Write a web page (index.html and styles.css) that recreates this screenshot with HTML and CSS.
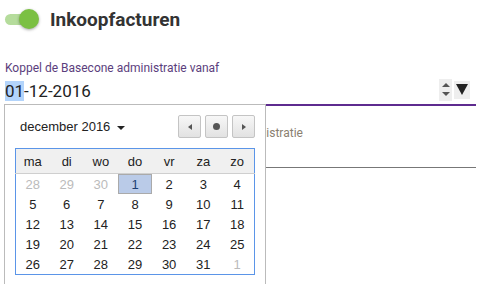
FILE: index.html
```html
<!DOCTYPE html>
<html lang="nl">
<head>
    <meta charset="UTF-8">
    <title>Inkoopfacturen</title>
    <link rel="stylesheet" href="styles.css">
</head>
<body>
    <div class="page">
        <div class="header">
            <span class="toggle"><span class="knob"></span></span>
            <h1>Inkoopfacturen</h1>
        </div>

        <div class="field focused">
            <label>Koppel de Basecone administratie vanaf</label>
            <div class="input-row">
                <span class="value"><span class="sel">01</span>-12-2016</span>
                <span class="spin"><span class="up"></span><span class="down"></span></span>
                <span class="drop"></span>
            </div>
        </div>

        <div class="field second">
            <span class="placeholder">Kies een Basecone administratie</span>
        </div>

        <!-- datumkiezer ligt over de velden heen -->
        <div class="datepicker">
            <div class="dp-head">
                <span class="month">december 2016 <span class="caret"></span></span>
                <div class="nav">
                    <button class="btn"><span class="tri-left"></span></button>
                    <button class="btn"><span class="dot"></span></button>
                    <button class="btn"><span class="tri-right"></span></button>
                </div>
            </div>
            <table class="cal">
                <thead>
                    <tr><th>ma</th><th>di</th><th>wo</th><th>do</th><th>vr</th><th>za</th><th>zo</th></tr>
                </thead>
                <tbody>
                    <tr><td class="other">28</td><td class="other">29</td><td class="other">30</td><td class="selected">1</td><td>2</td><td>3</td><td>4</td></tr>
                    <tr><td>5</td><td>6</td><td>7</td><td>8</td><td>9</td><td>10</td><td>11</td></tr>
                    <tr><td>12</td><td>13</td><td>14</td><td>15</td><td>16</td><td>17</td><td>18</td></tr>
                    <tr><td>19</td><td>20</td><td>21</td><td>22</td><td>23</td><td>24</td><td>25</td></tr>
                    <tr><td>26</td><td>27</td><td>28</td><td>29</td><td>30</td><td>31</td><td class="other">1</td></tr>
                </tbody>
            </table>
        </div>
    </div>
</body>
</html>
```

FILE: styles.css
```css
body {
    margin: 0;
    font-family: Roboto, "Liberation Sans", sans-serif;
    background: #fff;
    color: #222;
}
.page {
    position: relative;
    width: 478px;
    height: 284px;
    overflow: hidden;
}
.header {
    display: flex;
    align-items: center;
    height: 38px;
    padding-left: 5px;
}
.toggle {
    position: relative;
    display: inline-block;
    width: 33px;
    height: 11px;
    border-radius: 6px;
    background: #b5dc9c;
    margin-right: 12px;
}
.toggle .knob {
    position: absolute;
    right: -1px;
    top: -5px;
    width: 20px;
    height: 20px;
    border-radius: 50%;
    background: #7bc043;
    box-shadow: 0 1px 3px rgba(0,0,0,0.35);
}
h1 {
    margin: 0;
    font-size: 19px;
    font-weight: bold;
    color: #333;
}
.field {
    margin: 0 2px 0 5px;
}
.field.focused {
    padding-top: 23px;
    border-bottom: 2px solid #5e2b8f;
}
.field label {
    display: block;
    font-size: 12px;
    color: #5b3e7d;
    line-height: 14px;
}
.input-row {
    display: flex;
    align-items: center;
    height: 29px;
    padding-right: 6px;
}
.value {
    flex: 1;
    font-size: 17px;
    color: #222;
    padding-top: 2px;
}
.value .sel {
    background: #b3d4fb;
}
.spin {
    display: flex;
    flex-direction: column;
    justify-content: center;
    gap: 5px;
    width: 13px;
    height: 22px;
    background: #eee;
    align-items: center;
}
.spin .up {
    border: 4px solid transparent;
    border-top: 0;
    border-bottom: 4px solid #555;
}
.spin .down {
    border: 4px solid transparent;
    border-bottom: 0;
    border-top: 4px solid #555;
}
.drop {
    display: flex;
    justify-content: center;
    align-items: center;
    width: 16px;
    height: 18px;
    background: #eee;
    margin-left: 2px;
}
.drop::after {
    content: "";
    border: 6px solid transparent;
    border-bottom: 0;
    border-top: 11px solid #222;
}
.field.second {
    height: 61px;
    border-bottom: 1px solid #777;
}
.placeholder {
    display: block;
    padding-top: 20px;
    padding-left: 124px;
    font-size: 12px;
    color: #8a8070;
}
.datepicker {
    position: absolute;
    left: 4px;
    top: 104px;
    width: 260px;
    height: 200px;
    background: #fff;
    border: 1px solid #bbb;
    font-family: "Liberation Sans", Arial, sans-serif;
    font-size: 13px;
}
.dp-head {
    display: flex;
    justify-content: space-between;
    align-items: center;
    margin: 10px 10px 0 15px;
    height: 23px;
}
.month {
    color: #222;
}
.caret {
    display: inline-block;
    margin-left: 3px;
    vertical-align: middle;
    border: 4px solid transparent;
    border-bottom: 0;
    border-top: 4px solid #222;
}
.nav {
    display: flex;
    gap: 4px;
}
.btn {
    display: flex;
    justify-content: center;
    align-items: center;
    box-sizing: border-box;
    width: 23px;
    height: 23px;
    padding: 0;
    border: 1px solid #c4c4c4;
    border-radius: 2px;
    background: linear-gradient(#f7f7f7, #e2e2e2);
}
.tri-left {
    border: 3px solid transparent;
    border-left: 0;
    border-right: 4px solid #555;
}
.tri-right {
    border: 3px solid transparent;
    border-right: 0;
    border-left: 4px solid #555;
}
.dot {
    width: 7px;
    height: 7px;
    border-radius: 50%;
    background: #555;
}
.cal {
    margin: 10px 0 0 10px;
    width: 240px;
    border: 1px solid #5b95e8;
    border-collapse: collapse;
    table-layout: fixed;
}
.cal th {
    height: 24px;
    padding: 0;
    font-weight: normal;
    background: #f0f0f0;
    border-bottom: 1px solid #cfcfcf;
    color: #222;
}
.cal td {
    height: 20px;
    text-align: center;
    padding: 0;
    color: #222;
}
.cal td.other {
    color: #bbb;
}
.cal td.selected {
    background: #bacbe8;
    outline: 1px solid #aaa;
    outline-offset: -1px;
    color: #1d3f73;
}
```
